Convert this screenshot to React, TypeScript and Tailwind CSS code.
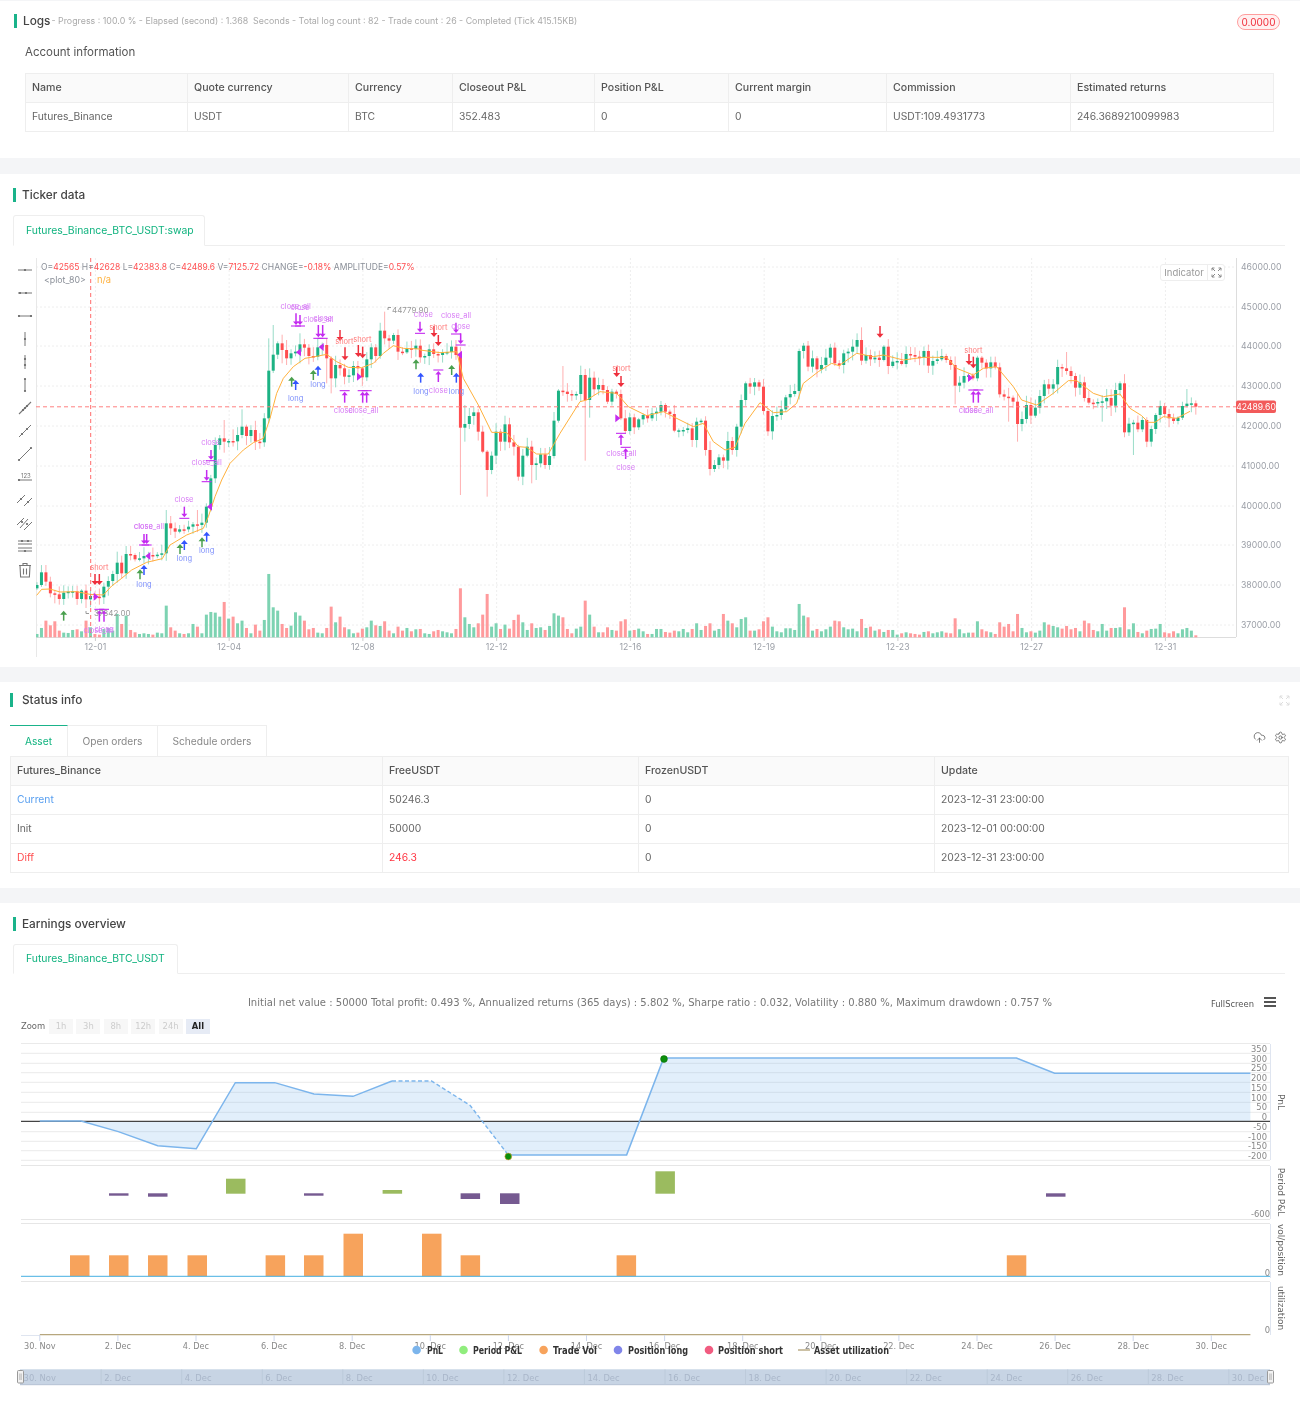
import React from 'react';
import { CloudUpload, Settings } from 'lucide-react';

const GREEN = '#1db284';
const RED = '#ff4d4f';
const MAGENTA = '#c42bf0';

// candle closes, read off the chart in 3x pixels (real y = 250 + v / 3)
const CLOSES = [
  1005, 967, 995, 1030, 1033, 1047, 1028, 1025, 1024, 1047, 1022, 1048, 1038, 1040, 1042, 1010, 993, 972, 938, 970,
  912, 915, 928, 925, 918, 915, 917, 914, 910, 820, 835, 845, 838, 838, 830, 823, 825, 818, 770, 685,
  585, 565, 575, 573, 574, 555, 530, 558, 540, 575, 577, 505, 362, 314, 280, 300, 325, 310, 305, 283,
  293, 318, 320, 292, 285, 325, 385, 345, 355, 380, 376, 348, 355, 382, 328, 292, 318, 242, 265, 272,
  255, 305, 307, 295, 297, 287, 322, 318, 298, 312, 315, 308, 306, 290, 315, 533, 522, 498, 487, 545,
  605, 660, 617, 545, 575, 523, 577, 590, 680, 617, 590, 645, 640, 613, 645, 618, 512, 422, 425, 432,
  433, 432, 375, 450, 383, 418, 405, 420, 455, 425, 432, 505, 543, 502, 532, 508, 495, 505, 490, 485,
  465, 485, 492, 542, 541, 540, 535, 570, 515, 512, 600, 657, 645, 622, 632, 573, 600, 530, 450, 400,
  410, 397, 410, 483, 544, 498, 495, 478, 442, 432, 423, 303, 287, 350, 325, 358, 345, 323, 293, 340,
  345, 310, 305, 290, 270, 332, 315, 328, 323, 330, 290, 348, 335, 333, 342, 312, 315, 320, 322, 303,
  347, 333, 328, 318, 330, 345, 407, 398, 378, 376, 385, 323, 338, 355, 337, 352, 433, 440, 443, 455,
  522, 507, 465, 497, 473, 438, 403, 416, 403, 351, 355, 363, 378, 413, 397, 444, 458, 460, 456, 454,
  444, 467, 420, 400, 547, 521, 518, 538, 510, 575, 537, 495, 468, 492, 505, 513, 503, 468, 461, 460,
  470,
];

const VOLUMES = [
  10, 28, 50, 36, 48, 20, 14, 13, 22, 24, 18, 50, 30, 10, 8, 25, 28, 20, 70, 40,
  65, 22, 15, 10, 12, 10, 8, 14, 12, 95, 30, 20, 12, 10, 12, 40, 32, 12, 68, 76,
  74, 62, 106, 56, 62, 42, 50, 28, 12, 38, 20, 52, 190, 90, 80, 40, 28, 35, 75, 65,
  50, 24, 28, 14, 12, 28, 92, 45, 62, 30, 24, 12, 14, 26, 30, 50, 36, 34, 48, 20,
  12, 32, 20, 28, 18, 24, 25, 12, 10, 18, 22, 18, 15, 12, 25, 147, 60, 40, 30, 42,
  68, 130, 32, 42, 25, 38, 26, 52, 68, 45, 22, 42, 28, 30, 22, 34, 72, 65, 60, 25,
  12, 26, 32, 110, 68, 32, 15, 15, 30, 22, 20, 48, 54, 20, 22, 26, 18, 10, 10, 25,
  25, 16, 14, 20, 18, 25, 15, 25, 42, 22, 34, 42, 20, 25, 70, 50, 42, 30, 55, 60,
  20, 20, 24, 48, 60, 32, 18, 15, 27, 27, 22, 100, 65, 60, 20, 25, 18, 24, 32, 50,
  48, 30, 24, 26, 18, 55, 28, 32, 20, 24, 16, 22, 22, 8, 12, 15, 12, 10, 8, 16,
  18, 12, 15, 18, 14, 12, 57, 24, 12, 14, 14, 48, 24, 18, 15, 10, 45, 32, 40, 18,
  70, 28, 15, 18, 14, 20, 45, 38, 34, 30, 26, 34, 24, 28, 18, 50, 42, 22, 18, 40,
  20, 28, 28, 30, 90, 24, 42, 16, 12, 20, 25, 26, 40, 15, 12, 18, 12, 24, 28, 20,
  6,
];

// long wicks that stand out: index -> [high, low]
const WICKS: Record<number, [number?, number?]> = {
  2: [945], 4: [undefined, 1060], 18: [905], 20: [888], 29: [780], 30: [798, 855], 36: [780], 41: [555],
  42: [510, 608], 44: [538], 46: [478], 49: [undefined, 600], 52: [265], 53: [225], 55: [undefined, 340],
  56: [270, 345], 59: [250, 340], 65: [undefined, 400], 66: [undefined, 430], 67: [undefined, 412], 78: [185],
  95: [undefined, 735], 96: [465, 575], 101: [undefined, 740], 111: [undefined, 700], 112: [undefined, 690],
  118: [348], 123: [undefined, 632], 124: [355, 503], 185: [232], 206: [undefined, 463], 218: [undefined, 515],
  220: [undefined, 575], 231: [306], 239: [undefined, 515], 241: [undefined, 498], 246: [undefined, 615], 258: [417],
};

const MA_LEFT = [[110,1036],[125,1018],[150,1017],[180,1026],[230,1025],[270,1033],[310,1035],[335,1008],[365,985],[395,960],[440,937],[487,926],[510,885],[560,855],[610,835],[625,800],[645,740],[665,690],[690,640],[730,600],[760,578],[790,565],[810,505],[830,430],[850,385],[880,350],[915,325],[945,320],[980,313],[1010,335],[1045,352],[1085,353],[1120,340],[1150,310],[1180,287],[1210,295],[1260,297]];
const MA_MID = [[0,300],[60,308],[110,305],[130,385],[175,465],[215,547],[260,548],[295,590],[320,592],[350,612],[385,612],[420,550],[480,455],[500,450],[540,425],[590,430],[625,470],[680,497],[730,485],[780,510],[820,530],[850,520],[880,575],[915,600],[945,592],[975,520],[1020,458],[1060,488],[1100,485],[1130,460],[1150,400],[1195,365],[1235,340],[1260,348]];
const MA_RIGHT = [[0,345],[50,310],[100,320],[130,315],[190,330],[250,322],[320,322],[350,355],[400,375],[430,355],[470,350],[520,410],[545,450],[590,465],[640,430],[685,392],[710,392],[760,430],[790,440],[840,432],[870,475],[905,497],[925,517],[945,517],[970,500],[1010,505],[1050,484]];

type ArrowKind = 'green' | 'blue' | 'red' | 'closeUp' | 'closeDown';
// [kind, panel offset, x, y1, y2] in 3x pixels
const ARROWS: [ArrowKind, number, number, number, number][] = [
  ['green', 0, 191, 1082, 1112], ['green', 0, 420, 958, 988], ['green', 0, 540, 882, 912], ['green', 0, 606, 862, 892],
  ['green', 0, 875, 380, 410], ['green', 0, 940, 360, 390], ['green', 0, 1248, 328, 358], ['green', 420, 95, 345, 375],
  ['blue', 0, 432, 945, 975], ['blue', 0, 553, 870, 900], ['blue', 0, 620, 845, 875], ['blue', 0, 887, 390, 420],
  ['blue', 0, 954, 347, 377], ['blue', 420, 2, 368, 398], ['blue', 420, 109, 368, 398],
  ['red', 0, 285, 972, 1002], ['red', 0, 298, 972, 1002], ['red', 0, 1020, 240, 270], ['red', 0, 1035, 292, 328],
  ['red', 0, 1075, 285, 318], ['red', 0, 1088, 290, 322], ['red', 420, 42, 228, 258], ['red', 420, 55, 255, 285],
  ['red', 420, 590, 350, 378], ['red', 420, 603, 378, 408], ['red', 840, 120, 228, 260], ['red', 840, 387, 312, 342],
  ['red', 840, 400, 320, 352],
  ['closeUp', 0, 298, 1078, 1115], ['closeUp', 0, 312, 1078, 1115], ['closeUp', 0, 1034, 422, 458], ['closeUp', 0, 1088, 422, 458],
  ['closeUp', 0, 1100, 422, 458], ['closeUp', 420, 55, 360, 396], ['closeUp', 420, 603, 550, 585], ['closeUp', 420, 617, 592, 627],
  ['closeUp', 840, 400, 420, 458], ['closeUp', 840, 415, 420, 458],
  ['closeDown', 0, 432, 852, 885], ['closeDown', 0, 440, 852, 885], ['closeDown', 0, 553, 770, 805], ['closeDown', 0, 620, 660, 695],
  ['closeDown', 0, 633, 600, 632], ['closeDown', 0, 888, 190, 228], ['closeDown', 0, 900, 195, 228], ['closeDown', 0, 955, 225, 265],
  ['closeDown', 0, 968, 225, 265], ['closeDown', 420, 0, 215, 250], ['closeDown', 420, 108, 218, 252], ['closeDown', 420, 122, 250, 285],
];

// [text, panel offset, x, y] in 3x pixels
const LABELS: [string, number, number, number][] = [
  ['short', 0, 298, 953], ['short', 0, 1033, 275], ['short', 0, 1087, 268], ['short', 420, 55, 232], ['short', 420, 604, 355], ['short', 840, 400, 300],
  ['long', 0, 432, 1003], ['long', 0, 553, 925], ['long', 0, 620, 900], ['long', 0, 887, 445], ['long', 0, 954, 402], ['long', 420, 3, 423], ['long', 420, 109, 423],
  ['close_all', 0, 296, 1140], ['close', 0, 312, 1138], ['close', 0, 430, 830], ['close_all', 0, 447, 830], ['close', 0, 552, 748], ['close_all', 0, 620, 638],
  ['close', 0, 632, 578], ['close_all', 0, 887, 168], ['close', 0, 900, 172], ['close_all', 0, 955, 208], ['close', 0, 968, 205], ['close', 0, 1030, 482],
  ['close_all', 0, 1090, 482], ['close', 420, 10, 193], ['close_all', 420, 108, 197], ['close', 420, 122, 229], ['close', 420, 55, 420], ['close_all', 420, 604, 610],
  ['close', 420, 617, 652], ['close', 840, 385, 482], ['close_all', 840, 415, 482],
];

// [direction, panel offset, x, y] in 3x pixels
const TRIANGLES: [number, number, number, number][] = [
  [-1, 0, 445, 918], [-1, 0, 630, 770], [-1, 0, 897, 307], [-1, 0, 965, 291], [1, 0, 287, 1040], [1, 0, 1077, 380],
  [-1, 420, 120, 314], [1, 420, 592, 505], [1, 840, 390, 384],
];

const Y_TICKS = [[46000, 267], [45000, 307], [44000, 346], [43000, 386], [42000, 426], [41000, 466], [40000, 506], [39000, 545], [38000, 585], [37000, 625]];
const X_TICKS = ['12-01', '12-04', '12-08', '12-12', '12-16', '12-19', '12-23', '12-27', '12-31'];

const noise = (i: number, k: number) => {
  const v = Math.sin(i * 12.9898 + k * 78.233) * 43758.5453;
  return v - Math.floor(v);
};
const cx = (i: number) => 37 + i * 4.457;
const zy = (v: number) => 250 + v / 3;

const SectionTitle = ({ title, className = 'gap-[6px]' }: { title: string; className?: string }) => (
  <div className={`flex items-center ${className}`}>
    <span className="w-[3px] h-[14px] bg-[#1ab38a]" />
    <h2 className="text-[11.8px] leading-[14px] font-medium text-[#444]">{title}</h2>
  </div>
);

const Cell = ({ head, color = 'text-[#666]', children }: { head?: boolean; color?: string; children: React.ReactNode }) => (
  <div
    className={`flex items-center h-[29px] px-[6px] border-r border-b border-[#eee] ${
      head ? 'bg-[#fafafa] font-medium text-[#555] text-[10.6px]' : `${color} text-[10.3px]`
    }`}
  >
    {children}
  </div>
);

const dot = (x: number, y: number, r = 1.1) => <circle cx={x} cy={y} r={r} fill="#666" stroke="none" />;

const ToolIcon = ({ children }: { children: React.ReactNode }) => (
  <div className="h-[23.08px] flex items-center justify-center">
    <svg width="18" height="18" viewBox="0 0 18 18" fill="none" stroke="#777" strokeWidth="1">
      {children}
    </svg>
  </div>
);

const DRAW_TOOLS = [
  <><path d="M2 9h14" />{dot(9, 9)}</>,
  <><path d="M2 9h14" />{dot(4, 9)}{dot(10, 9)}</>,
  <><path d="M2 9h14" />{dot(3, 9)}{dot(15, 9)}</>,
  <><path d="M9 2v14" />{dot(9, 9)}</>,
  <><path d="M9 2v14" />{dot(9, 6)}{dot(9, 12)}</>,
  <><path d="M9 3v12" />{dot(9, 3)}{dot(9, 15)}</>,
  <><path d="M3 15 15 3" strokeWidth="1.1" />{dot(9, 9)}{dot(7, 11)}{dot(11, 7)}</>,
  <><path d="M3 15 15 3" />{dot(6, 12)}{dot(11, 7)}</>,
  <><path d="M3 15 15 3" />{dot(3, 15)}{dot(15, 3)}</>,
  <><path d="M2 12h14" />{dot(3, 12)}<text x="5" y="9.5" fontSize="6" fill="#777" stroke="none">123</text></>,
  <><path d="M1 12 9 4M8 15 16 7" />{dot(5, 8)}{dot(12, 11)}</>,
  <><path d="M1 11 8 4M4 14 12 5M8 16 16 8" />{dot(6, 8)}{dot(11, 10)}</>,
  <><path d="M2 4h14M2 7h14M2 11h14M2 14h14" />{dot(6, 4)}{dot(12, 4)}{dot(9, 14)}</>,
  <path d="M3 4.5h12M7 4.5V2.5h4v2M4 4.5l.6 11.5h8.8L14 4.5M7.5 7.5v6M10.5 7.5v6" strokeWidth="1.1" />,
];

const Arrow = ({ kind, x, a, b }: { kind: ArrowKind; x: number; a: number; b: number }) => {
  const color = { green: '#4aa04e', blue: '#3355ff', red: '#ee2f3c', closeUp: MAGENTA, closeDown: MAGENTA }[kind];
  if (kind === 'red') {
    return (
      <g stroke={color} fill={color}>
        <path d={`M${x} ${a}V${b - 2}`} strokeWidth="1.5" />
        <path d={`M${x - 3.5} ${b - 3}H${x + 3.5}L${x} ${b + 1}Z`} stroke="none" />
      </g>
    );
  }
  if (kind === 'closeDown') {
    return (
      <g stroke={color} fill={color}>
        <path d={`M${x} ${a}V${b - 3}`} strokeWidth="1.5" />
        <path d={`M${x - 3} ${b - 4.5}H${x + 3}L${x} ${b - 1}Z`} stroke="none" />
        <path d={`M${x - 5} ${b}H${x + 5}`} strokeWidth="1.1" />
      </g>
    );
  }
  if (kind === 'closeUp') {
    return (
      <g stroke={color} fill={color}>
        <path d={`M${x - 5} ${a}H${x + 5}`} strokeWidth="1.1" />
        <path d={`M${x - 3} ${a + 4.5}H${x + 3}L${x} ${a + 1}Z`} stroke="none" />
        <path d={`M${x} ${a + 3}V${b}`} strokeWidth="1.5" />
      </g>
    );
  }
  return (
    <g stroke={color} fill={color}>
      <path d={`M${x - 3.5} ${a + 4}H${x + 3.5}L${x} ${a}Z`} stroke="none" />
      <path d={`M${x} ${a + 3}V${b}`} strokeWidth="1.5" />
    </g>
  );
};

const labelColor = (t: string) => (t === 'short' ? '#ff7b7b' : t === 'long' ? '#7d8ffb' : '#d77bf5');

const TickerChart = () => {
  const maPoints = [
    ...MA_LEFT.map(([x, y]) => [x / 3, zy(y)]),
    ...MA_MID.map(([x, y]) => [420 + x / 3, zy(y)]),
    ...MA_RIGHT.map(([x, y]) => [840 + x / 3, zy(y)]),
  ];
  return (
    <svg width="1264" height="421" viewBox="36 246 1264 421" className="block font-['Inter',sans-serif]">
      {Y_TICKS.map(([p, y]) => (
        <g key={p}>
          <path d={`M36 ${y}H1236`} stroke="#eee" strokeDasharray="2 2" />
          <text x="1241" y={y + 3.2} fontSize="8.7" fill="#9a9ea6">{p}.00</text>
        </g>
      ))}
      {X_TICKS.map((t, i) => {
        const x = 95.4 + i * 133.75;
        return (
          <g key={t}>
            <path d={`M${x} 258V637`} stroke="#eee" strokeDasharray="2 2" />
            <path d={`M${x} 637v4`} stroke="#ccc" />
            <text x={x} y="650" fontSize="8.7" fill="#9a9ea6" textAnchor="middle">{t}</text>
          </g>
        );
      })}
      <path d="M36.5 258V657" stroke="#e8e8e8" />
      <path d="M1236.5 258V637M36 637.5H1236" stroke="#ddd" />

      {VOLUMES.map((v, i) => {
        const up = CLOSES[i] < (CLOSES[i - 1] ?? 1015);
        return <rect key={i} x={cx(i) - 1.5} y={637.3 - v / 3} width="3" height={v / 3} fill={up ? '#7dd3b2' : '#ff9a9c'} />;
      })}

      {CLOSES.map((c, i) => {
        const o = CLOSES[i - 1] ?? 1015;
        const up = c < o;
        const top = Math.min(o, c);
        const bottom = Math.max(o, c);
        const hi = WICKS[i]?.[0] ?? top - 4 - noise(i, 1) * 24;
        const lo = WICKS[i]?.[1] ?? bottom + 4 + noise(i, 2) * 24;
        const color = up ? GREEN : RED;
        return (
          <g key={i}>
            <path d={`M${cx(i)} ${zy(hi)}V${zy(lo)}`} stroke={color} strokeOpacity="0.45" />
            <rect x={cx(i) - 1.5} y={zy(top)} width="3" height={Math.max((bottom - top) / 3, 1.5)} fill={color} />
          </g>
        );
      })}

      <polyline points={maPoints.map(p => p.join(',')).join(' ')} fill="none" stroke="#ffb13d" strokeWidth="1" strokeLinejoin="round" />

      <path d="M36 406.8H1236" stroke="#ff8080" strokeDasharray="4 3" />
      <path d="M90.7 258V637" stroke="#ff6b6b" strokeDasharray="4 3" />

      {ARROWS.map(([k, o, x, a, b], i) => (
        <Arrow key={i} kind={k} x={o + x / 3} a={zy(a)} b={zy(b)} />
      ))}
      {TRIANGLES.map(([d, o, x, y], i) => {
        const px = o + x / 3;
        const py = zy(y);
        return <path key={i} d={`M${px - 2 * d} ${py - 4}L${px + 3 * d} ${py}L${px - 2 * d} ${py + 4}Z`} fill={MAGENTA} />;
      })}
      {LABELS.map(([t, o, x, y], i) => (
        <text key={i} x={o + x / 3} y={zy(y) + 2.6} fontSize="7.5" textAnchor="middle" fill={labelColor(t)}>{t}</text>
      ))}

      <path d="M388 310v-2.5h3" stroke="#999" fill="none" />
      <text x="392" y="313" fontSize="8" fill="#999">44779.90</text>
      <path d="M86 611v2.5h3" stroke="#999" fill="none" />
      <text x="94" y="616" fontSize="8" fill="#999">37342.00</text>

      <text transform="translate(41 269.5) scale(0.917 1)" fontSize="9.3" fill="#8a8f98">
        O=<tspan fill={RED}>42565</tspan> H=<tspan fill={RED}>42628</tspan> L=<tspan fill={RED}>42383.8</tspan> C=
        <tspan fill={RED}>42489.6</tspan> V=<tspan fill={RED}>7125.72</tspan> CHANGE=<tspan fill={RED}>-0.18%</tspan> AMPLITUDE=
        <tspan fill={RED}>0.57%</tspan>
      </text>
      <text x="44" y="282.5" fontSize="8.8" fill="#8a8f98">{'<plot_80>'}</text>
      <text x="97" y="282.5" fontSize="9.3" fill="#ffb13d">n/a</text>

      <rect x="1236" y="400.5" width="40" height="12.5" rx="2" fill="#f25a5a" />
      <text x="1256" y="410" fontSize="8.6" fill="#fff" textAnchor="middle">42489.60</text>
    </svg>
  );
};

const Expand = ({ color = '#888' }: { color?: string }) => (
  <svg width="11" height="11" viewBox="0 0 11 11" fill="none" stroke={color} strokeWidth="1">
    <path d="M1 1l3 3M1 3.5V1h2.5M10 1 7 4M7.5 1H10v2.5M1 10l3-3M1 7.5V10h2.5M10 10 7 7M10 7.5V10H7.5" />
  </svg>
);

// Earnings chart
const DAY = 39.05;
const ex = (d: number) => 39.8 + d * DAY;
const PNL: [number, number][] = [[39.8,1121],[81,1121],[118.3,1131.7],[157.7,1145.7],[196.3,1148.7],[235.3,1082.7],[274.7,1082.7],[314,1094],[353,1096.3],[392,1081]];
const PNL_DASH: [number, number][] = [[392,1081],[431.5,1081],[470,1105.3],[508.3,1155]];
const PNL_END: [number, number][] = [[508.3,1155],[626.6,1155],[663.7,1058],[1016.4,1058],[1054.6,1073.3],[1250.4,1073.3]];
const toPath = (pts: [number, number][]) => pts.map(([x, y], i) => `${i ? 'L' : 'M'}${x} ${y}`).join('');

const PNL_GRID = [1043.5, 1053.3, 1063.3, 1072.7, 1082.3, 1092.3, 1102.3, 1112.3, 1131.7, 1141.3, 1150.7, 1160.3];
const PNL_LABELS = [[350,1052],[300,1061.7],[250,1071],[200,1081],[150,1090.6],[100,1100.6],[50,1110],[0,1120],[-50,1130],[-100,1139.6],[-150,1149],[-200,1159]];
const PERIOD_BARS = [
  [109,1193.3,2.4,0],[148,1193.3,3.4,0],[226,1178.7,15,1],[304,1193.3,2.4,0],[382.6,1190,3.7,1],[460.6,1193.3,5.7,0],[500,1193.3,10.7,0],[655.4,1171.3,22.4,1],[1046,1193.3,3.4,0],
];
const VOL_BARS = [[70,1255.3],[109,1255.3],[148,1255.3],[187.5,1255.3],[265.6,1255.3],[304,1255.3],[343.5,1233.7],[422,1233.7],[460.6,1255.3],[616.6,1255.3],[1006.8,1255.3]];
const LEGEND: [string, string, number, number, number][] = [
  ['PnL', '#7cb5ec', 416.6, 427, 16], ['Period P&L', '#90ed7d', 463.5, 473, 49], ['Trade Vol', '#f7a35c', 543.6, 553, 44],
  ['Position long', '#8085e9', 618, 628, 60], ['Position short', '#f15c80', 709, 718, 65],
];
const RANGE_BUTTONS = ['1h', '3h', '8h', '12h', '24h'];
const SIDE_LABELS: [string, number, number][] = [['PnL', 1278, 1102], ['Period P&L', 1278, 1192], ['vol/position', 1278, 1250], ['utilization', 1278, 1308]];

const EarningsChart = () => (
  <svg width="1300" height="373" viewBox="0 1034 1300 373" className="block font-['DejaVu_Sans',sans-serif]">
    {PNL_GRID.map(y => <path key={y} d={`M21 ${y}H1270`} stroke="#eaeaea" />)}
    <path d="M21 1165.5H1270M21 1219.5H1270M21 1223.5H1270M21 1281.5H1270" stroke="#e6e6e6" />
    <path d="M1270.5 1044V1160M1270.5 1166V1219M1270.5 1224V1278M1270.5 1282V1335" stroke="#dfe5f0" />
    <path d={`${toPath([...PNL, ...PNL_DASH.slice(1), ...PNL_END.slice(1)])}L1250.4 1121L39.8 1121Z`} fill="#7cb5ec" fillOpacity="0.22" />
    <path d="M21 1121.3H1270" stroke="#444" strokeWidth="1.2" />
    <path d={toPath(PNL)} fill="none" stroke="#7cb5ec" strokeWidth="1.4" />
    <path d={toPath(PNL_DASH)} fill="none" stroke="#7cb5ec" strokeWidth="1.4" strokeDasharray="4 2.5" />
    <path d={toPath(PNL_END)} fill="none" stroke="#7cb5ec" strokeWidth="1.6" />
    <circle cx="508.3" cy="1156.5" r="3.4" fill="#0b8f0b" stroke="#e8a040" strokeWidth="0.6" />
    <circle cx="664" cy="1059" r="3.4" fill="#0b8f0b" stroke="#0a6f0a" strokeWidth="0.6" />
    {PNL_LABELS.map(([v, y]) => (
      <text key={v} x="1267" y={y} fontSize="8.4" fill="#888" textAnchor="end">{v}</text>
    ))}

    {PERIOD_BARS.map(([x, y, h, up]) => (
      <rect key={x} x={x} y={y} width="19.5" height={h} fill={up ? '#9bbb5f' : '#765a91'} />
    ))}
    <text x="1270" y="1217" fontSize="8.4" fill="#888" textAnchor="end">-600</text>

    {VOL_BARS.map(([x, y]) => (
      <rect key={x} x={x} y={y} width="19.5" height={1276.3 - y} fill="#f7a35c" />
    ))}
    <path d="M21 1276.3H1270" stroke="#45b0e1" />
    <text x="1270" y="1276" fontSize="8.4" fill="#888" textAnchor="end">0</text>

    <path d="M39.8 1334.7H1250.4" stroke="#b7a77e" strokeWidth="1.2" />
    <path d="M21 1335.5H39.8" stroke="#dfe5f0" />
    <text x="1270" y="1333" fontSize="8.4" fill="#888" textAnchor="end">0</text>

    {SIDE_LABELS.map(([t, x, y]) => (
      <text key={t} x={x} y={y} fontSize="9" fill="#666" textAnchor="middle" transform={`rotate(90 ${x} ${y})`}>{t}</text>
    ))}

    {Array.from({ length: 16 }, (_, i) => {
      const x = ex(i * 2);
      return (
        <g key={i}>
          <path d={`M${x} 1335v6`} stroke="#ccd6eb" />
          <text x={x} y="1349" fontSize="8.2" fill="#888" textAnchor="middle">{i === 0 ? '30. Nov' : `${i * 2}. Dec`}</text>
        </g>
      );
    })}

    {LEGEND.map(([t, c, dx, tx, w]) => (
      <g key={t}>
        <circle cx={dx} cy="1350" r="4.3" fill={c} />
        <text x={tx} y="1353.5" fontSize="10" fontWeight="700" fill="#333" textLength={w} lengthAdjust="spacingAndGlyphs">{t}</text>
      </g>
    ))}
    <path d="M798 1350H810" stroke="#b7a77e" strokeWidth="1.4" />
    <text x="814" y="1353.5" fontSize="10" fontWeight="700" fill="#333" textLength="75" lengthAdjust="spacingAndGlyphs">Asset utilization</text>

    <rect x="20" y="1369.3" width="1250" height="15.4" fill="#c7d4e4" />
    <path d="M20 1384.7H1270" stroke="#b4c1d3" />
    {Array.from({ length: 16 }, (_, i) => {
      const x = 23.6 + i * 80.55;
      return (
        <g key={i}>
          {i > 0 && <path d={`M${x - 3} 1369.5V1384.5`} stroke="#bccada" />}
          <text x={x} y="1381" fontSize="8.4" fill="#a9b6c9">{i === 0 ? '30. Nov' : `${i * 2}. Dec`}</text>
        </g>
      );
    })}
    {[17.5, 1267.5].map(x => (
      <g key={x}>
        <rect x={x} y="1370.5" width="6" height="12.5" rx="1" fill="#f2f2f2" stroke="#999" />
        <path d={`M${x + 2.3} 1373.5v6.5M${x + 3.7} 1373.5v6.5`} stroke="#999" strokeWidth="0.6" />
      </g>
    ))}
  </svg>
);

const App = () => (
  <div className="w-[1300px] h-[1407px] bg-[#f4f5f7] pt-px font-['Inter',sans-serif] overflow-hidden blur-[0.35px]">
    <section className="bg-white h-[157px] pt-[13px] pl-[14px] pr-[20px]">
      <div className="flex items-start">
        <div className="flex items-center gap-[6px]">
          <span className="w-[3px] h-[14px] bg-[#1ab38a]" />
          <h2 className="text-[11.8px] leading-[14px] font-medium text-[#444]">Logs</h2>
        </div>
        <span className="ml-px text-[8.85px] leading-[14px] text-[#aaa] whitespace-pre">
          - Progress : 100.0 % - Elapsed (second) : 1.368  Seconds - Total log count : 82 - Trade count : 26 - Completed (Tick 415.15KB)
        </span>
        <span className="ml-auto h-[16px] w-[43px] flex items-center justify-center rounded-full border border-[#ff9d9d] bg-[#fff0f0] text-[10px] text-[#f0303c]">
          0.0000
        </span>
      </div>
      <h3 className="mt-[14px] ml-[11px] text-[11.5px] leading-[16px] text-[#555]">Account information</h3>
      <div className="mt-[13px] ml-[11px] w-[1249px] grid grid-cols-[162px_161px_104px_142px_134px_158px_184px_203px] border-l border-t border-[#eee]">
        {['Name', 'Quote currency', 'Currency', 'Closeout P&L', 'Position P&L', 'Current margin', 'Commission', 'Estimated returns'].map(h => (
          <Cell key={h} head>{h}</Cell>
        ))}
        {['Futures_Binance', 'USDT', 'BTC', '352.483', '0', '0', 'USDT:109.4931773', '246.3689210099983'].map((c, i) => (
          <Cell key={i}>{c}</Cell>
        ))}
      </div>
    </section>

    <section className="bg-white h-[493px] mt-[16px] pt-[14px]">
      <div className="pl-[13px]">
        <SectionTitle title="Ticker data" />
      </div>
      <div className="mt-[13px] ml-[13px] mr-[15px] h-[31px] border-b border-[#eee] flex">
        <div className="h-[31px] w-[192px] pl-[12px] flex items-center border border-b-white border-[#eee] rounded-t-[3px] text-[10.4px] text-[#10b37f]">
          Futures_Binance_BTC_USDT:swap
        </div>
      </div>
      <div className="flex">
        <aside className="w-[36px] pl-[15px] pr-px pt-[12px]">
          {DRAW_TOOLS.map((tool, i) => (
            <ToolIcon key={i}>{tool}</ToolIcon>
          ))}
        </aside>
        <div className="relative">
          <TickerChart />
          <div className="absolute left-[1124px] top-[18px] w-[65px] h-[17px] flex items-center bg-white border border-[#eee] rounded-[3px] text-[9.5px] text-[#999]">
            <span className="w-[47px] text-center border-r border-[#eee] leading-[15px]">Indicator</span>
            <span className="flex-1 flex justify-center"><Expand /></span>
          </div>
        </div>
      </div>
    </section>

    <section className="bg-white h-[206px] mt-[15px] pt-[11px] pl-[10px] pr-[11px]">
      <div className="flex items-center justify-between">
        <SectionTitle title="Status info" className="gap-[9px]" />
        <span className="mr-[-1px]"><Expand color="#ddd" /></span>
      </div>
      <div className="mt-[18px] flex items-start justify-between">
        <div className="flex h-[31px] text-[10.2px] text-[#888]">
          <div className="w-[58px] flex items-center justify-center pt-px border-t border-t-[#1ab38a] border-r border-[#eee] text-[#10b37f]">Asset</div>
          <div className="w-[90px] flex items-center justify-center pt-px border-t border-r border-[#eee]">Open orders</div>
          <div className="w-[109px] flex items-center justify-center pt-px border-t border-r border-[#eee]">Schedule orders</div>
        </div>
        <div className="flex items-center gap-[8px] text-[#555] mr-[2px] mt-[6px]">
          <CloudUpload size={13} strokeWidth={1.4} />
          <Settings size={13} strokeWidth={1.4} />
        </div>
      </div>
      <div className="grid grid-cols-[372px_256px_296px_354px] border-l border-t border-[#eee]">
        {['Futures_Binance', 'FreeUSDT', 'FrozenUSDT', 'Update'].map(h => (
          <Cell key={h} head>{h}</Cell>
        ))}
        <Cell color="text-[#5aa0f0]">Current</Cell>
        <Cell>50246.3</Cell>
        <Cell>0</Cell>
        <Cell>2023-12-31 23:00:00</Cell>
        <Cell>Init</Cell>
        <Cell>50000</Cell>
        <Cell>0</Cell>
        <Cell>2023-12-01 00:00:00</Cell>
        <Cell color="text-[#ff4d4f]">Diff</Cell>
        <Cell color="text-[#ff3340]">246.3</Cell>
        <Cell>0</Cell>
        <Cell>2023-12-31 23:00:00</Cell>
      </div>
    </section>

    <section className="bg-white h-[504px] mt-[15px] pt-[14px]">
      <div className="pl-[13px]">
        <SectionTitle title="Earnings overview" />
      </div>
      <div className="mt-[13px] ml-[13px] mr-[15px] h-[30px] border-b border-[#eee] flex">
        <div className="h-[30px] w-[165px] pl-[12px] flex items-center border border-b-white border-[#eee] rounded-t-[3px] text-[10.4px] text-[#10b37f]">
          Futures_Binance_BTC_USDT
        </div>
      </div>
      <div className="mt-[20px] h-[14px] grid grid-cols-[1fr_auto_1fr] items-center font-['DejaVu_Sans',sans-serif] text-[#777]">
        <span />
        <span className="text-[10.05px] whitespace-nowrap">
          Initial net value : 50000 Total profit: 0.493 %, Annualized returns (365 days) : 5.802 %, Sharpe ratio : 0.032, Volatility : 0.880 %, Maximum drawdown : 0.757 %
        </span>
        <div className="flex items-center justify-end gap-[10px] pr-[24px]">
          <span className="text-[8.4px] text-[#555] mt-[4px]">FullScreen</span>
          <span className="flex flex-col gap-[2px] w-[12px]">
            <i className="block h-[2px] bg-[#555]" />
            <i className="block h-[2px] bg-[#555]" />
            <i className="block h-[2px] bg-[#555]" />
          </span>
        </div>
      </div>
      <div className="mt-[11px] ml-[21px] h-[15px] flex items-center gap-[3.4px] font-['DejaVu_Sans',sans-serif] text-[8.4px]">
        <span className="w-[24.6px] text-[#666]">Zoom</span>
        {RANGE_BUTTONS.map(b => (
          <span key={b} className="w-[24px] h-[15px] flex items-center justify-center bg-[#f7f7f7] text-[#ccc]">{b}</span>
        ))}
        <span className="w-[24px] h-[15px] flex items-center justify-center bg-[#e6ebf5] text-[#222] font-bold">All</span>
      </div>
      <EarningsChart />
    </section>
  </div>
);

export default App;
